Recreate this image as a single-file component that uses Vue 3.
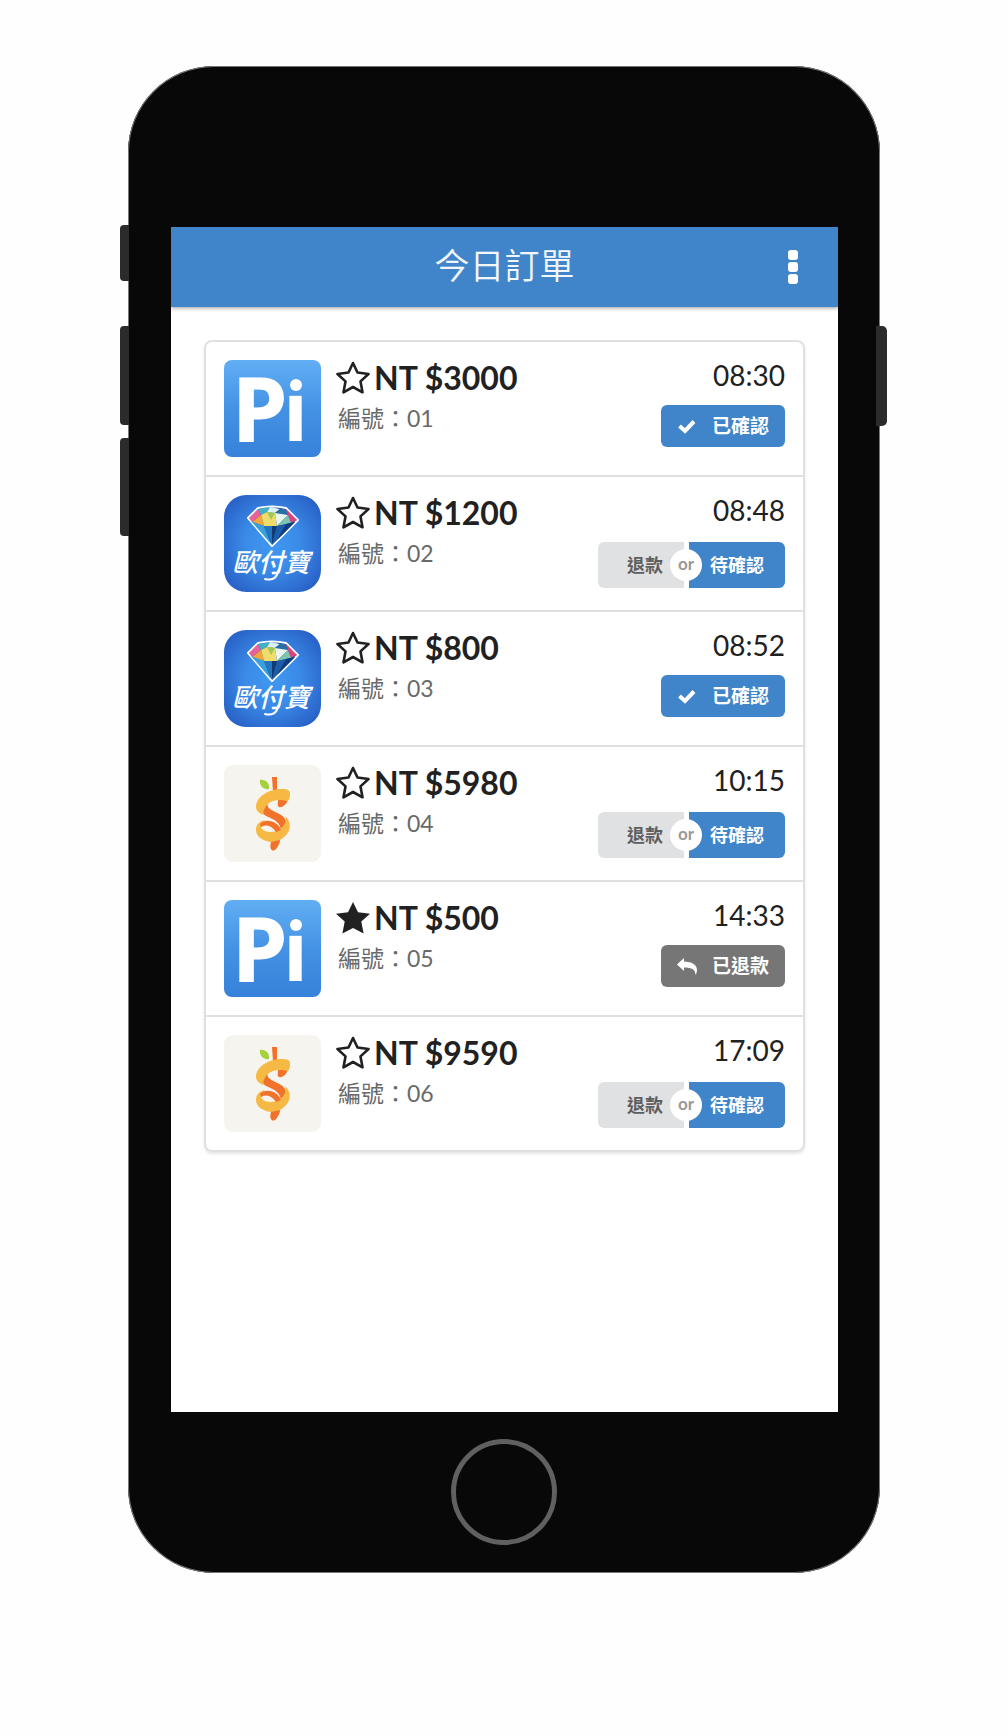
<script setup>
import { ref } from 'vue'

const orders = ref([
  { id: '01', amount: 3000, time: '08:30', wallet: 'pi', starred: false, status: 'confirmed' },
  { id: '02', amount: 1200, time: '08:48', wallet: 'allpay', starred: false, status: 'pending' },
  { id: '03', amount: 800, time: '08:52', wallet: 'allpay', starred: false, status: 'confirmed' },
  { id: '04', amount: 5980, time: '10:15', wallet: 'orange', starred: false, status: 'pending' },
  { id: '05', amount: 500, time: '14:33', wallet: 'pi', starred: true, status: 'refunded' },
  { id: '06', amount: 9590, time: '17:09', wallet: 'orange', starred: false, status: 'pending' },
])
</script>

<template>
  <div class="page">
    <svg class="defs" width="0" height="0" aria-hidden="true">
      <defs>
        <linearGradient id="pi-bg" x1="0" y1="0" x2="0" y2="1">
          <stop offset="0" stop-color="#62aef4" />
          <stop offset="0.5" stop-color="#4492e4" />
          <stop offset="1" stop-color="#3781da" />
        </linearGradient>
        <radialGradient id="allpay-bg" cx="0.5" cy="0.5" r="0.62">
          <stop offset="0" stop-color="#3f98f0" />
          <stop offset="0.45" stop-color="#3b8be8" />
          <stop offset="1" stop-color="#2860c6" />
        </radialGradient>
      </defs>
    </svg>

    <div class="phone">
      <span class="side-key mute"></span>
      <span class="side-key volume-up"></span>
      <span class="side-key volume-down"></span>
      <span class="side-key power"></span>

      <main class="screen">
        <header class="bar">
          <h1>今日訂單</h1>
          <button class="menu" type="button" aria-label="選單">
            <i></i><i></i><i></i>
          </button>
        </header>

        <ul class="orders">
          <li v-for="order in orders" :key="order.id" class="order">
            <svg v-if="order.wallet === 'pi'" class="logo" viewBox="0 0 97 97">
              <rect width="97" height="97" rx="8" fill="url(#pi-bg)" />
              <text class="pi-text" y="81"><tspan class="pi-cap" x="8">P</tspan><tspan class="pi-small" x="59">ı</tspan></text>
              <circle cx="72" cy="25" r="6" fill="#fff" />
            </svg>
            <svg v-else-if="order.wallet === 'allpay'" class="logo" viewBox="0 0 97 97">
              <rect width="97" height="97" rx="22" fill="url(#allpay-bg)" />
              <path d="M24 23 34 13Q48 10 62 13L74 25 48 51Z" fill="#16509c" stroke="#fff" stroke-width="2" stroke-linejoin="round" />
              <path d="M25 23 34 14 37 20 28 27Z" fill="#e8609c" />
              <path d="M34 14 46 12 43 17 37 20Z" fill="#3fb2c8" />
              <path d="M46 12 56 14 51 18 43 17Z" fill="#d9f0f4" />
              <path d="M56 14 62 14 64 20 51 18Z" fill="#2a6ea8" />
              <path d="M62 14 73 25 67 28 64 20Z" fill="#e0407c" />
              <path d="M28 27 37 20 40 31Z" fill="#f3a53c" />
              <path d="M37 20 43 17 51 18 53 31 40 31Z" fill="#f0dc6a" />
              <path d="M43 17 51 18 47 25Z" fill="#9cc95a" />
              <path d="M51 18 64 20 53 31Z" fill="#e9f6ee" />
              <path d="M64 20 67 28 53 31Z" fill="#7cc5b0" />
              <path d="M27 26 40 31 47 49Z" fill="#3aa0dc" />
              <path d="M40 31 53 31 48 50Z" fill="#2476c0" />
              <path d="M48 31 53 31 48 50Z" fill="#123a74" />
              <path d="M53 31 71 27 48 50Z" fill="#1d5ca8" />
              <path d="M62 29 71 27 53 45Z" fill="#0f3c80" />
              <text class="allpay-text" x="8" y="77">歐付寶</text>
              <path d="M54 76C53 83 48 86 41 84" fill="none" stroke="#fff" stroke-width="2" stroke-linecap="round" />
            </svg>
            <svg v-else class="logo" viewBox="0 0 97 97">
              <rect width="97" height="97" rx="9" fill="#f6f4ef" />
              <path d="M48 12H53V26H49Z" fill="#f1722b" />
              <path d="M36 15C41 14 46 18 45 24C39 25 35 20 36 15Z" fill="#a5d13a" />
              <path d="M54 35C58 33 62 34 64 35C62 40 58 43 55 42C53 41 54 38 54 35Z" fill="#f1722b" />
              <path d="M43 38C38 43 37 48 42 51C52 55 56 58 57 65C61 63 63 58 61 54C58 48 48 47 44 42Z" fill="#f1722b" />
              <path d="M32 42C32 31 46 24 57 24C64 24 66 25 66 29C66 33 65 36 63 36C53 33 43 37 41 43C39 45 39 48 40 50C36 49 32 46 32 42Z" fill="#f6b944" />
              <path d="M61 51C67 56 67 64 63 69C58 75 53 77 47 77C38 76 32 71 32 65C32 59 36 56 41 55C38 58 36 62 38 64C43 69 57 68 61 58C62 55 62 53 61 51Z" fill="#f6b944" />
              <path d="M36 59C42 52 55 57 57 65L52 67C48 61 43 59 37 62Z" fill="#f1722b" />
              <path d="M47 77 56 75C56 79 53 83 51 85C48 87 45 84 47 77Z" fill="#f1722b" />
            </svg>

            <div class="info">
              <div class="amount">
                <button class="star" type="button" aria-label="標記" :aria-pressed="order.starred" @click="order.starred = !order.starred">
                  <svg viewBox="0 0 34 34" aria-hidden="true">
                    <path v-if="order.starred" d="M17 1 22 11.2 34 12.7 25.3 20.6 27.6 32.6 17 27 6.4 32.6 8.7 20.6 0 12.7 12 11.2Z" fill="#212121" />
                    <path v-else d="M17 2 21.5 11.500 32.500 13 24.500 20.400 26.500 31.300 17 26 7.500 31.300 9.500 20.400 1.500 13 12.500 11.500Z" fill="none" stroke="#212121" stroke-width="2.6" stroke-linejoin="round" />
                  </svg>
                </button>
                <strong>NT ${{ order.amount }}</strong>
              </div>
              <p class="number">編號：{{ order.id }}</p>
            </div>

            <div class="side">
              <time>{{ order.time }}</time>
              <div v-if="order.status === 'pending'" class="choice">
                <button class="refund" type="button" @click="order.status = 'refunded'">退款</button>
                <span class="or">or</span>
                <button class="confirm" type="button" @click="order.status = 'confirmed'">待確認</button>
              </div>
              <button v-else class="state" :class="order.status" type="button">
                <svg v-if="order.status === 'confirmed'" viewBox="0 0 20 18" aria-hidden="true">
                  <path d="M2.500 9 8 14 17 4.500" fill="none" stroke="#fff" stroke-width="4" />
                </svg>
                <svg v-else viewBox="0 0 20 18" aria-hidden="true">
                  <path d="M0 7.500 7 1V4.500C15 4.500 20 8 20 13Q20 15.500 18.500 18C18.500 12.500 15 10.500 7 10.500V14Z" fill="#fff" />
                </svg>
                <span class="state-label">{{ order.status === 'confirmed' ? '已確認' : '已退款' }}</span>
              </button>
            </div>
          </li>
        </ul>
      </main>

      <button class="home" type="button" aria-label="主畫面"></button>
    </div>
  </div>
</template>

<style>
body {
  margin: 0;
  background: #fefefe;
}
</style>

<style scoped>
.page {
  padding: 66px 16px 163px;
  font-family: Lato, "Noto Sans CJK TC", sans-serif;
  color: #212121;
}

.defs {
  position: absolute;
}

button {
  margin: 0;
  padding: 0;
  border: 0;
  background: none;
  font: inherit;
  color: inherit;
  cursor: pointer;
}

.phone {
  position: relative;
  box-sizing: border-box;
  max-width: 752px;
  margin: 0 auto;
  padding: 161px 42px 28px;
  border-radius: 86px;
  background: #080808;
  box-shadow: inset 0 0 0 1px #777;
}

.side-key {
  position: absolute;
  left: -8px;
  width: 9px;
  border-radius: 4px 0 0 4px;
  background: #2b2b2b;
}

.mute {
  top: 159px;
  height: 56px;
}

.volume-up {
  top: 260px;
  height: 99px;
}

.volume-down {
  top: 372px;
  height: 98px;
}

.power {
  top: 260px;
  right: -7px;
  left: auto;
  width: 11px;
  height: 100px;
  border-radius: 0 5px 5px 0;
}

.screen {
  min-height: 1185px;
  margin-left: 1px;
  background: #fff;
}

.bar {
  display: grid;
  grid-template-columns: 1fr auto 1fr;
  align-items: center;
  height: 80px;
  padding: 0 40px;
  background: #4085ca;
  box-shadow: 0 1px 4px rgba(0, 0, 0, 0.4);
  clip-path: inset(0 0 -8px);
}

h1 {
  grid-column: 2;
  margin: 0;
  padding-bottom: 4px;
  font-size: 35px;
  line-height: 48px;
  font-weight: 350;
  color: #f3f6fa;
}

.menu {
  display: flex;
  flex-direction: column;
  gap: 2px;
  justify-self: end;
}

.menu i {
  width: 10px;
  height: 10px;
  border-radius: 3px;
  background: #fff;
}

.orders {
  margin: 33px;
  padding: 0;
  list-style: none;
  border: 2px solid #dfe0e1;
  border-radius: 8px;
  box-shadow: 0 2px 3px rgba(0, 0, 0, 0.1);
}

.order {
  display: flex;
  padding: 18px;
}

.order + .order {
  border-top: 2px solid #dfe0e1;
}

.logo {
  flex: none;
  width: 97px;
  height: 97px;
  overflow: visible;
}

.pi-text {
  font-family: "Open Sans", sans-serif;
  font-weight: 700;
  fill: #fff;
}

.pi-cap {
  font-size: 88px;
  stroke: #fff;
  stroke-width: 1px;
}

.pi-small {
  font-size: 82px;
}

.allpay-text {
  font: italic 500 26px "Noto Sans CJK TC", sans-serif;
  fill: #fff;
}

.info {
  flex: 1;
  padding-left: 15px;
}

.amount {
  display: flex;
  align-items: center;
  gap: 4px;
  font-size: 32px;
  line-height: 36px;
  white-space: nowrap;
}

.star,
.star svg {
  display: block;
  width: 34px;
  height: 34px;
}

.number {
  margin: 6px 0 0 2px;
  font-size: 23px;
  line-height: 32px;
  font-weight: 400;
  color: #696969;
}

.side {
  display: flex;
  flex-direction: column;
  align-items: flex-end;
}

time {
  font-size: 28px;
  line-height: 30px;
}

.state {
  display: flex;
  align-items: center;
  justify-content: space-between;
  box-sizing: border-box;
  width: 124px;
  height: 42px;
  margin-top: 15px;
  padding: 0 16px;
  border-radius: 6px;
  font-size: 19px;
  font-weight: 700;
  color: #fff;
}

.state svg {
  width: 20px;
  height: 18px;
}

.state-label {
  padding-bottom: 3px;
}

.confirmed {
  background: #4085ca;
}

.refunded {
  background: #767676;
}

.choice {
  position: relative;
  display: flex;
  gap: 5px;
  height: 46px;
  margin-top: 17px;
  font-size: 18px;
  font-weight: 700;
}

.refund {
  width: 86px;
  padding: 0 0 3px 8px;
  border-radius: 6px 0 0 6px;
  background: #e0e1e2;
  color: #5e5e5e;
}

.confirm {
  width: 96px;
  padding-bottom: 3px;
  border-radius: 0 6px 6px 0;
  background: #4085ca;
  color: #fff;
}

.or {
  position: absolute;
  top: 7px;
  left: 72px;
  width: 32px;
  height: 32px;
  border-radius: 50%;
  background: #fff;
  font-size: 17px;
  line-height: 30px;
  text-align: center;
  color: #999;
}

.home {
  display: block;
  box-sizing: border-box;
  width: 106px;
  height: 106px;
  margin: 27px auto 0;
  border: 5px solid #606060;
  border-radius: 50%;
}
</style>
